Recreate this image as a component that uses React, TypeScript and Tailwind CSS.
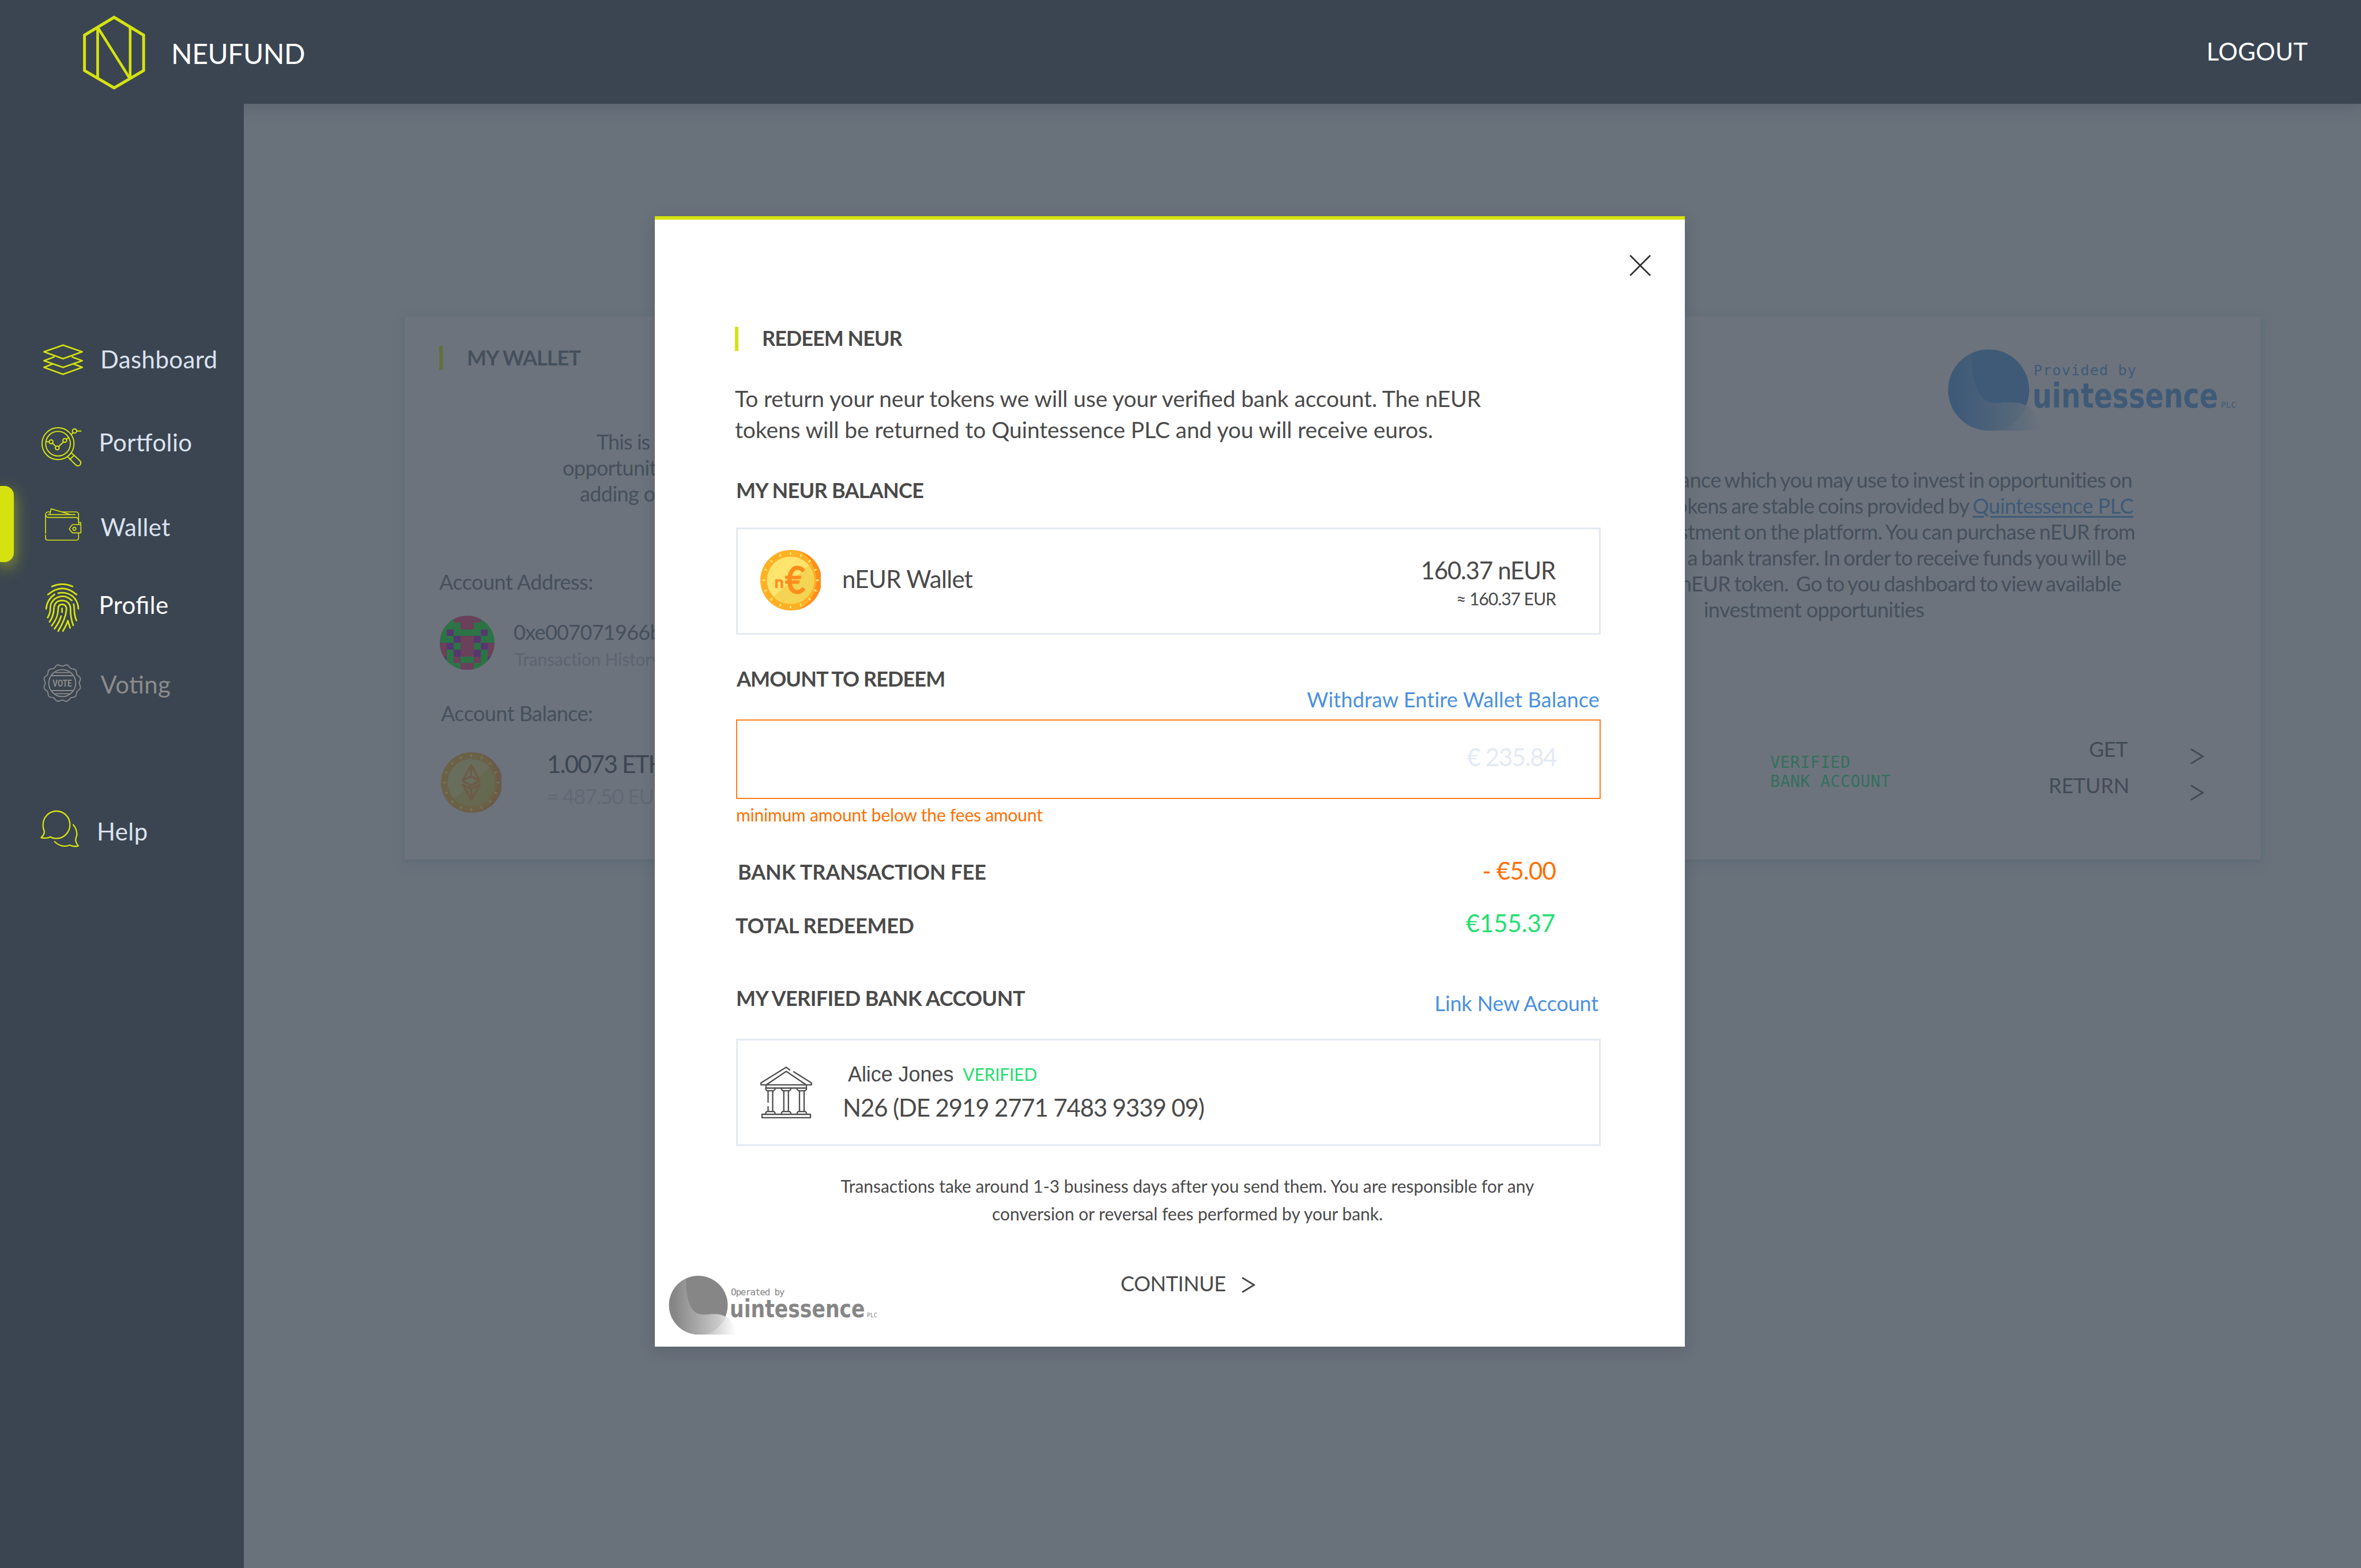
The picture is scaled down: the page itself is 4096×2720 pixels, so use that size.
import type { ReactNode } from "react";

const LIME = "#d6e20f";

/* ---------- Sidebar icons ---------- */

function NavIcon({ viewBox, color = LIME, width, children }: { viewBox: string; color?: string; width: number; children: ReactNode }) {
  return (
    <svg
      className="ml-[66px] size-[80px] shrink-0 overflow-visible"
      viewBox={viewBox}
      fill="none"
      stroke={color}
      strokeWidth={width}
      strokeLinecap="round"
      strokeLinejoin="round"
    >
      {children}
    </svg>
  );
}

const DashboardIcon = () => (
  <NavIcon viewBox="198 69 240 240" width={8}>
    <path d="M229 151 328 116 428 151 328 187Z" />
    <path d="M281 178 229 197 328 232 428 197 376 178" />
    <path d="M275 214 229 232 328 268 428 232 382 214" />
  </NavIcon>
);

const PortfolioIcon = () => (
  <NavIcon viewBox="198 501 240 240" width={6}>
    <circle cx="302" cy="629" r="83" />
    <circle cx="302" cy="629" r="64" />
    <circle cx="266" cy="619" r="10" />
    <circle cx="298" cy="651" r="10" />
    <circle cx="337" cy="612" r="10" />
    <circle cx="388" cy="563" r="11" />
    <path d="M240 619H255M274 627 291 644M305 644 330 620M345 606 356 597M371 582 380 571M400 563H421" />
    <path d="M352 697 393 738Q404 750 416 740 426 729 415 717L372 677M385 691 363 711" />
  </NavIcon>
);

const WalletIcon = () => (
  <NavIcon viewBox="198 942 240 240" width={5}>
    <path d="M237 1000V1096M237 1104V1118Q237 1131 250 1131H396Q409 1131 409 1118V1096" />
    <path d="M262 984H252Q237 985 237 998 238 1013 256 1013H396Q409 1015 409 1030" />
    <path d="M322 984H396Q409 985 409 998V1048" />
    <path d="M250 998H391M260 996 266 968 362 996" />
    <path d="M377 1050H421V1093H377Q366 1083 361 1072 366 1061 377 1050ZM411 1039H420V1050" />
    <circle cx="387" cy="1072" r="8" />
  </NavIcon>
);

const ProfileIcon = () => (
  <NavIcon viewBox="198 89 240 240" width={8.5}>
    <path d="M271 114Q325 90 377 114M250 156Q325 92 398 156" />
    <path d="M303 149Q325 144 345 149C385 160 405 190 408 230M240 230C243 200 255 175 284 155" />
    <path d="M374 187C350 165 330 164 318 166 285 170 262 195 262 225 262 250 258 262 248 276" />
    <path d="M383 206C390 232 382 258 398 291" />
    <path d="M258 298C275 275 280 255 281 225 284 200 300 187 325 187 355 188 368 210 367 235 366 270 372 290 381 316" />
    <path d="M269 318C295 285 303 260 303 228 303 214 312 207 325 207 340 208 347 220 346 235 342 275 325 310 303 346" />
    <path d="M323 228V248M284 334C300 312 312 292 318 268M327 346C340 325 348 310 353 292L365 330" />
  </NavIcon>
);

const badge = Array.from({ length: 180 }, (_, i) => {
  const a = (i * 2 * Math.PI) / 180;
  const r = 93 + 4.5 * Math.cos(12 * (a - Math.PI / 12));
  return `${(324 + r * Math.sin(a)).toFixed(1)},${(615 - r * Math.cos(a)).toFixed(1)}`;
}).join(" ");

const VotingIcon = () => (
  <NavIcon viewBox="198 501 240 240" width={5.5} color="#8c8c8c">
    <polygon points={badge} />
    <circle cx="324" cy="615" r="70" />
    <path d="M290 560H358M270 576H378M270 654H378M288 670H360" />
    <text x="274" y="633" textLength="100" lengthAdjust="spacingAndGlyphs" fontSize="49" fontWeight="700" fontFamily="Roboto, sans-serif" fill="#8c8c8c" stroke="none">
      VOTE
    </text>
  </NavIcon>
);

const HelpIcon = () => (
  <NavIcon viewBox="198 1266 240 240" width={7}>
    <path d="M262 1415Q275 1424 293 1423A70 71 0 1 0 224 1353Q223 1370 230 1384 233 1402 214 1419 242 1426 262 1415Z" />
    <path d="M381 1352Q402 1375 400 1408 391 1428 395 1440 400 1455 408 1462 385 1469 363 1458 322 1475 284 1440" />
  </NavIcon>
);

function NavItem({ icon, label, className, active }: { icon: ReactNode; label: string; className: string; active?: boolean }) {
  return (
    <div className="relative flex h-[80px] items-center">
      {active && <div className="absolute -top-[31px] left-0 h-[132px] w-[24px] rounded-r-[16px] bg-[#d6e20f] shadow-[0_9px_27px_rgba(214,226,15,0.6)]" />}
      {icon}
      <span className={`text-[42px] leading-[50px] tracking-[0.38px] [font-feature-settings:'liga'] ${className}`}>{label}</span>
    </div>
  );
}

/* ---------- Shared drawings ---------- */

const blocks = ["ggmmmmgg", "gggmmggg", "gpggggpg", "ggpmmpgg", "mpgmmgpm", "mgpmmpgm", "pgmggmgp", "gggmmggg"];
const blockColor: Record<string, string> = { g: "#2c7346", m: "#6a405b", p: "#55376f" };

const Identicon = () => (
  <svg className="h-[94px] w-[95px] shrink-0 rounded-full" viewBox="0 0 8 8" preserveAspectRatio="none" shapeRendering="crispEdges">
    {blocks.flatMap((row, y) => [...row].map((c, x) => <rect key={`${x}-${y}`} x={x} y={y} width="1" height="1" fill={blockColor[c]} />))}
  </svg>
);

function Coin({ ring, shade, face, faceShade, tick, children }: { ring: string; shade: string; face: string; faceShade: string; tick: string; children: ReactNode }) {
  return (
    <svg className="size-[105px] shrink-0" viewBox="0 0 105 105" fill="none">
      <circle cx="52.5" cy="52.5" r="52.5" fill={ring} />
      <path d="M54 0A52.5 52.5 0 0 1 54 105A43 52.5 0 0 0 54 0Z" fill={shade} />
      <circle cx="52.5" cy="52.5" r="41" fill={face} />
      <path d="M23.2 81.2A41 41 0 0 0 84.4 26.8Z" fill={faceShade} />
      {Array.from({ length: 16 }, (_, i) => (
        <rect key={i} x="51" y="3.2" width="3" height="5.4" rx="1.4" fill={tick} transform={`rotate(${i * 22.5} 52.5 52.5)`} />
      ))}
      {children}
    </svg>
  );
}

const EthCoin = () => (
  <Coin ring="#6b6146" shade="#6b5a48" face="#686d5c" faceShade="#656950" tick="#71735d">
    <g stroke="#6e5a48" strokeWidth="3.2" strokeLinejoin="round">
      <path d="M52.3 22 37.5 49.5 52.3 57.6 67.5 49.5Z" />
      <path d="M52.3 22V41.5M37.5 49.5 52.3 41.5 67.5 49.5" />
      <path d="M37.5 56 52.3 63 67.5 56 52.3 82.5ZM52.3 63V82.5" />
    </g>
  </Coin>
);

const EuroCoin = () => (
  <Coin ring="#ffb024" shade="#ff8e1d" face="#ffe46e" faceShade="#f4d452" tick="#ffe46e">
    <g fill="#ff8e1d" fontFamily="Lato, sans-serif" stroke="#ff8e1d" strokeLinejoin="round">
      <text x="43.5" y="75" fontSize="63" fontWeight="400" strokeWidth="2.4" textLength="34" lengthAdjust="spacingAndGlyphs">€</text>
      <text x="24.5" y="66" fontSize="29" fontWeight="700" strokeWidth="0.6">n</text>
    </g>
  </Coin>
);

function QuintessenceMark({ id, from, mid, to, className }: { id: string; from: string; mid: string; to: string; className: string }) {
  const wave = "M30 5C30 36 36 58 49 65 58 69 68 66.5 79 66.5 101 66 113 79 117 102L52 102A51 51 0 0 1 30 5Z";
  return (
    <svg className={`shrink-0 overflow-visible ${className}`} viewBox="0 0 103 102" fill="none">
      <defs>
        <linearGradient id={`${id}-tail`} gradientUnits="userSpaceOnUse" x1="0" y1="0" x2="117" y2="0">
          <stop offset="0" stopColor={from} />
          <stop offset="0.62" stopColor={mid} />
          <stop offset="1" stopColor={to} />
        </linearGradient>
        <linearGradient id={`${id}-body`} gradientUnits="userSpaceOnUse" x1="0" y1="0" x2="122" y2="0">
          <stop offset="0.08" stopColor={from} />
          <stop offset="0.7" stopColor={mid} />
          <stop offset="1" stopColor={to} />
        </linearGradient>
        <clipPath id={`${id}-clip`}>
          <circle cx="51.5" cy="51" r="51" />
        </clipPath>
      </defs>
      <path d="M52 102 86 66.5C104 68 113 80 117 102Z" fill={`url(#${id}-tail)`} />
      <circle cx="51.5" cy="51" r="51" fill={from} />
      <path d={wave} fill={`url(#${id}-body)`} clipPath={`url(#${id}-clip)`} />
    </svg>
  );
}

const BankIcon = () => (
  <svg className="size-[90px] shrink-0" viewBox="0 0 90 90" fill="none" stroke="#4f4f50" strokeWidth="2.3" strokeLinejoin="round" strokeLinecap="round">
    <path d="M51 6 45 1.3 1.2 28.5V31.8H88.8V28.5L58 9.2M12 30.8 45 8.5 78 30.8" />
    <path d="M10 32V37.5H80V32" />
    {[17.5, 44.8, 72].map((x, i) => (
      <g key={x}>
        <path d={`M${x - 8} 37.5V40L${x - 5.5} 42.2H${x + 5.5}L${x + 8} 40V37.5`} />
        <path d={`M${x + 4} 43V78`} />
        <path d={i === 0 ? `M${x - 4} 43V62M${x - 4} 70V78` : `M${x - 4} 43V78`} />
        <path d={`M${x - 8} 82.5V80L${x - 6} 78.2H${x + 6}L${x + 8} 80V82.5`} />
      </g>
    ))}
    <path d="M3 83H87V88.8H3Z" />
  </svg>
);

const Chevron = ({ color, className = "" }: { color: string; className?: string }) => (
  <svg className={`h-[28px] w-[24px] shrink-0 ${className}`} viewBox="0 0 24 28" fill="none" stroke={color} strokeWidth="3" strokeLinecap="round">
    <path d="M2 2 21.5 14 2 26" />
  </svg>
);

/* ---------- Page behind the dialog ---------- */

function Header() {
  return (
    <header className="relative z-10 flex h-[180px] items-start justify-between bg-[#3a4551] pr-[92px] shadow-[0_6px_24px_rgba(58,69,81,0.28)]">
      <div className="flex items-start">
        <svg className="h-[180px] w-[297px]" viewBox="0 0 297 180" fill="none" stroke={LIME} strokeWidth="5">
          <path d="M198 30 249.2 61V122.3L198 152.5 146.6 122.3V61Z" />
          <path d="M169.4 48V135M225.8 48V135M170.5 49 224.5 135" strokeWidth="4.6" />
        </svg>
        <span className="mt-[64px] text-[48px] leading-[57px] tracking-[-0.46px] text-white">NEUFUND</span>
      </div>
      <span className="mt-[64px] text-[42px] leading-[50px] tracking-[0.38px] text-white">LOGOUT</span>
    </header>
  );
}

function Sidebar() {
  return (
    <nav className="relative z-20 flex w-[423px] shrink-0 flex-col bg-[#3a4551] pt-[403px] text-[#dbe2f0]">
      <NavItem icon={<DashboardIcon />} label="Dashboard" className="ml-[28px]" />
      <div className="h-[64px]" />
      <NavItem icon={<PortfolioIcon />} label="Portfolio" className="ml-[25.5px]" />
      <div className="h-[67px]" />
      <NavItem icon={<WalletIcon />} label="Wallet" className="ml-[28.5px]" active />
      <div className="h-[55px]" />
      <NavItem icon={<ProfileIcon />} label="Profile" className="ml-[25.5px] text-white" />
      <div className="h-[58px]" />
      <NavItem icon={<VotingIcon />} label="Voting" className="ml-[28.5px] text-[#8c8c8c]" />
      <div className="h-[175px]" />
      <NavItem icon={<HelpIcon />} label="Help" className="ml-[22px]" />
    </nav>
  );
}

function WalletSummary() {
  return (
    <div className="flex flex-col items-start pt-[51px] text-[36px] leading-[44px] whitespace-nowrap text-[#45505c]">
      <div className="ml-[60px] flex h-[42px] items-start">
        <div className="h-[42px] w-[6px] bg-[#626f3a]" />
        <h2 className="-mt-px ml-[42px] leading-[42px] font-bold tracking-[-0.9px]">MY WALLET</h2>
      </div>
      <div className="mt-[102px] leading-[45px] tracking-[-0.92px]">
        <p className="ml-[333px]">This is the</p>
        <p className="ml-[274px] tracking-[-0.6px]">opportunities</p>
        <p className="ml-[304px] tracking-[-0.6px]">adding or</p>
      </div>
      <p className="mt-[108px] ml-[60px] tracking-[-0.5px]">Account Address:</p>
      <div className="mt-[37px] ml-[61px] flex h-[94px] items-start">
        <Identicon />
        <div className="mt-[6px] ml-[33px]">
          <p className="tracking-[-0.7px]">0xe007071966b</p>
          <p className="mt-[7px] ml-[2px] text-[30px] leading-[36px] tracking-[-0.15px] text-[#5b6570]">Transaction History</p>
        </div>
      </div>
      <p className="mt-[53px] ml-[63px] tracking-[-0.55px]">Account Balance:</p>
      <div className="mt-[46px] ml-[63px] flex h-[105px] items-start">
        <EthCoin />
        <div className="-mt-[5px] ml-[79px]">
          <p className="text-[42px] leading-[50px] tracking-[-1.79px] text-[#3d4652]">1.0073 ETH</p>
          <p className="mt-[9px] -ml-px tracking-[-1.23px] text-[#616a75]">= 487.50 EUR</p>
        </div>
      </div>
    </div>
  );
}

function ProviderPanel() {
  return (
    <div className="flex w-[1024px] flex-col items-end pt-[57px] text-[36px] whitespace-nowrap text-[#45505c]">
      <div className="mr-[39px] flex h-[141px] w-[504px] items-start text-[#3e5a77]">
        <QuintessenceMark id="provider" from="#3e5a77" mid="#56677a" to="#6c737d" className="h-[141px] w-[142px]" />
        <div className="relative mt-[24px] ml-[5px] font-['DejaVu_Sans_Mono',monospace]">
          <p className="ml-[2px] text-[25px] leading-[25px] tracking-[1.23px]">Provided by</p>
          <div className="mt-[2px] flex items-baseline">
            <span className="w-[327px]">
              <span className="inline-block origin-left scale-x-[0.895] font-['DejaVu_Sans_Condensed','DejaVu_Sans',sans-serif] text-[59px] leading-[59px] font-bold">uintessence</span>
            </span>
            <span className="text-[14.5px] leading-none">PLC</span>
          </div>
        </div>
      </div>
      <div className="mt-[63px] flex flex-col items-end leading-[45px] tracking-[-0.6px] [word-spacing:-2.2px]">
        <p className="mr-[223px]">This is your nEUR balance which you may use to invest in opportunities on</p>
        <p className="mr-[221px]">
          The nEUR tokens are stable coins provided by <a className="tracking-[-0.52px] text-[#3e5a77] underline decoration-[3px] underline-offset-[4px] [word-spacing:0px]">Quintessence PLC</a>
        </p>
        <p className="mr-[218px]">for investment on the platform. You can purchase nEUR from</p>
        <p className="mr-[233px]">a bank transfer. In order to receive funds you will be</p>
        <p className="mr-[242px] whitespace-pre">nEUR token.  Go to you dashboard to view available</p>
        <p className="mr-[584px] [word-spacing:0px]">investment opportunities</p>
      </div>
      <div className="mt-[188px] mr-[98px] flex items-start">
        <div className="mt-[38px] w-[220px] font-['DejaVu_Sans_Mono',monospace] text-[28px] leading-[33.4px] tracking-[0.57px] text-[#33705c]">
          <p>VERIFIED</p>
          <p>BANK ACCOUNT</p>
        </div>
        <div className="w-[403px] text-right leading-[63px] text-[#424b56]">
          <p className="pr-[3px] tracking-[-0.44px]">GET</p>
          <p className="tracking-[-0.19px]">RETURN</p>
        </div>
        <div className="ml-[106px] flex flex-col gap-[35px] pt-[30px]">
          <Chevron color="#424b56" />
          <Chevron color="#424b56" />
        </div>
      </div>
    </div>
  );
}

/* ---------- Redeem dialog ---------- */

function RedeemDialog() {
  return (
    <div className="absolute top-[375px] left-[1136px] z-30 h-[1961px] w-[1787px] border-t-[6px] border-[#d6e20f] bg-white pr-[146px] pl-[141px] text-[36px] leading-[44px] whitespace-nowrap text-[#4a4a4a] shadow-[0_6px_24px_rgba(40,50,60,0.22)]">
      <div className="-mr-[87px] flex justify-end pt-[61px]">
        <svg className="size-[37px]" viewBox="0 0 37 37" stroke="#2c2c2c" strokeWidth="2.6">
          <path d="M1 1 36 36M36 1 1 36" />
        </svg>
      </div>

      <div className="mt-[88px] -ml-[2px] flex h-[42px] items-start">
        <div className="h-[42px] w-[6px] bg-[#d6e20f]" />
        <h1 className="-mt-[2px] ml-[41px] leading-[42px] font-bold tracking-[-1px]">REDEEM NEUR</h1>
      </div>
      <p className="mt-[55px] -ml-[2px] text-[39px] leading-[54px] tracking-[-0.1px] [font-feature-settings:'liga']">
        To return your neur tokens we will use your verified bank account. The nEUR
        <br />
        tokens will be returned to Quintessence PLC and you will receive euros.
      </p>

      <h2 className="mt-[56px] font-bold tracking-[-0.72px]">MY NEUR BALANCE</h2>
      <div className="mt-[43px] flex h-[186px] items-center justify-between border-[3px] border-[#e4e9f5] pr-[75px] pl-[39px]">
        <div className="-mt-[4px] flex items-center">
          <EuroCoin />
          <span className="-mt-[4px] ml-[37px] text-[42px] leading-[50px] tracking-[-0.68px]">nEUR Wallet</span>
        </div>
        <div className="mt-[3px] text-right">
          <p className="pr-[1px] text-[42px] leading-[50px] tracking-[-1.25px]">160.37 nEUR</p>
          <p className="mt-[6px] text-[30px] leading-[36px] tracking-[-1.02px]">≈ 160.37 EUR</p>
        </div>
      </div>

      <div className="mt-[54px] flex h-[93px] items-start justify-between">
        <h2 className="ml-[1px] font-bold tracking-[-0.92px]">AMOUNT TO REDEEM</h2>
        <a className="mt-[36px] pr-[2px] tracking-[0.18px] text-[#4a90e2]">Withdraw Entire Wallet Balance</a>
      </div>
      <div className="flex h-[138px] items-center justify-end border-2 border-[#ff7d1a] pr-[75px]">
        <span className="-mt-[9px] text-[42px] leading-[50px] tracking-[-1.45px] text-[#e4e9f5]">€ 235.84</span>
      </div>
      <p className="mt-[9px] text-[30px] leading-[36px] tracking-[-0.2px] text-[#ff6f00]">minimum amount below the fees amount</p>

      <div className="mt-[54px] flex h-[50px] items-start justify-between pr-[78px]">
        <h2 className="mt-[5px] ml-[3px] font-bold tracking-[-0.1px]">BANK TRANSACTION FEE</h2>
        <span className="text-[42px] leading-[50px] tracking-[-0.87px] text-[#ff6f00]">- €5.00</span>
      </div>
      <div className="mt-[41px] flex h-[50px] items-start justify-between pr-[79px]">
        <h2 className="mt-[7px] -ml-[1px] font-bold tracking-[-0.32px]">TOTAL REDEEMED</h2>
        <span className="text-[42px] leading-[50px] tracking-[-0.1px] text-[#22e06f]">€155.37</span>
      </div>

      <div className="mt-[83px] flex h-[93px] items-start justify-between">
        <h2 className="font-bold tracking-[-0.58px]">MY VERIFIED BANK ACCOUNT</h2>
        <a className="mt-[9px] pr-[4px] tracking-[-0.17px] text-[#4a90e2]">Link New Account</a>
      </div>
      <div className="flex h-[186px] items-start border-[3px] border-[#e4e9f5] pl-[39px]">
        <div className="pt-[45px]">
          <BankIcon />
        </div>
        <div className="ml-[53px] pt-[37px]">
          <div className="flex items-start">
            <span className="ml-[9px] font-['Liberation_Sans',sans-serif] tracking-[-0.07px]">Alice Jones</span>
            <span className="mt-[3px] ml-[16px] text-[30px] leading-[36px] tracking-[-0.2px] text-[#22e06f]">VERIFIED</span>
          </div>
          <p className="mt-[10px] text-[42px] leading-[50px] tracking-[-1.15px]">N26 (DE 2919 2771 7483 9339 09)</p>
        </div>
      </div>

      <p className="mt-[46px] pl-[66px] text-center text-[30px] leading-[47.5px] tracking-[-0.05px]">
        Transactions take around 1-3 business days after you send them. You are responsible for any
        <br />
        conversion or reversal fees performed by your bank.
      </p>

      <div className="mt-[75px] -ml-[117px] flex items-start">
        <div className="mt-[9px] flex w-[370px] items-start text-[#868686]">
          <QuintessenceMark id="operator" from="#868686" mid="#c8c8c8" to="#ffffff" className="h-[102px] w-[103px]" />
          <div className="relative mt-[21px] ml-[3px] font-['DejaVu_Sans_Mono',monospace]">
            <p className="ml-[2px] text-[16px] leading-[16px] tracking-[-1.25px]">Operated by</p>
            <div className="-mt-[1px] flex items-baseline">
              <span className="w-[238px]">
                <span className="inline-block origin-left scale-x-[0.895] font-['DejaVu_Sans_Condensed','DejaVu_Sans',sans-serif] text-[43px] leading-[43px] font-bold">uintessence</span>
              </span>
              <span className="text-[10px] leading-none">PLC</span>
            </div>
          </div>
        </div>
        <button className="ml-[414px] flex items-start">
          <span className="tracking-[-0.4px]">CONTINUE</span>
          <Chevron color="#4a4a4a" className="mt-[11px] ml-[27px]" />
        </button>
      </div>
    </div>
  );
}

export default function App() {
  return (
    <div className="relative flex h-[2720px] w-[4096px] flex-col overflow-hidden bg-[#69717b] font-['Lato',sans-serif]">
      <Header />
      <div className="flex flex-1">
        <Sidebar />
        <main className="flex-1 pt-[369px] pl-[279px]">
          <section className="flex h-[942px] w-[3220px] justify-between bg-[#6c737d] shadow-[0_3px_6px_rgba(80,92,102,0.3),0_6px_18px_rgba(92,114,122,0.4)]">
            <WalletSummary />
            <ProviderPanel />
          </section>
        </main>
      </div>
      <RedeemDialog />
    </div>
  );
}
